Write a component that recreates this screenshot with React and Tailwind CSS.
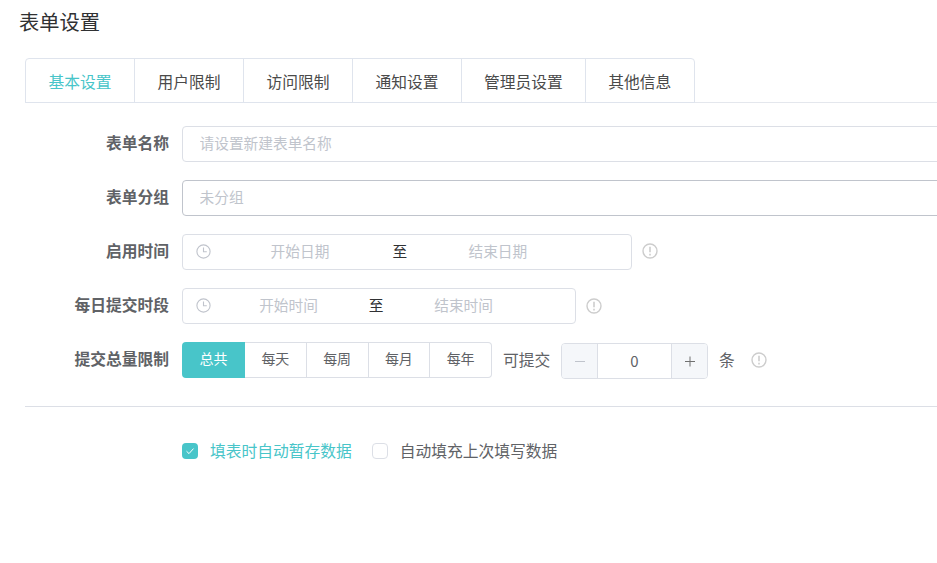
import React from "react";

const font = { fontFamily: '"Noto Sans CJK SC", "Noto Sans", sans-serif' };

function Clock() {
  return (
    <svg width="15" height="15" viewBox="0 0 15 15" fill="none" stroke="#c0c4cc" strokeWidth="1.1" className="block">
      <circle cx="7.5" cy="7.5" r="6.6" />
      <path d="M7.5 3.6V7.8H10.8" />
    </svg>
  );
}

function Info({ className = "" }) {
  return (
    <svg width="16" height="16" viewBox="0 0 16 16" fill="none" stroke="#cdcdcd" strokeWidth="1.4" className={`block shrink-0 ${className}`}>
      <circle cx="8" cy="8" r="7" />
      <path d="M8 3.8V9.2" strokeWidth="1.6" />
      <path d="M8 10.8V12.4" strokeWidth="1.6" />
    </svg>
  );
}

function Row({ label, children }) {
  return (
    <div className="flex items-start h-9 mb-[18px]">
      <label className="w-[157px] pr-[13px] text-right text-[15.75px] font-bold leading-[34px] text-[#606266] shrink-0">{label}</label>
      {children}
    </div>
  );
}

function Range({ width, iconWidth, sepClass, start, end }) {
  return (
    <div className={`${width} h-9 shrink-0 flex items-center px-[10px] pb-[2px] border border-[#dcdfe6] rounded bg-white`}>
      <span className={`${iconWidth} shrink-0`}><span className="block w-[25px] pl-[2.5px]"><Clock /></span></span>
      <span className="w-[39%] text-center text-[14.7px] text-[#c0c4cc]">{start}</span>
      <span className={`${sepClass} shrink-0 text-center text-[14.7px] text-[#303133]`}>至</span>
      <span className="w-[39%] text-center text-[14.7px] text-[#c0c4cc]">{end}</span>
    </div>
  );
}

const tabs = ["基本设置", "用户限制", "访问限制", "通知设置", "管理员设置", "其他信息"];
const periods = ["每天", "每周", "每月", "每年"];

export default function App() {
  return (
    <div className="w-[937px] h-[563px] overflow-hidden bg-white" style={font}>
      <div className="w-[1200px]">
        <h1 className="pl-[19px] pt-[8px] text-[20.25px] leading-[28px] font-normal text-[#303133]">表单设置</h1>

        <div className="ml-[25px] mt-[22px] flex h-[45px] border-b border-[#e4e7ed]">
          <div className="flex h-[45px] border border-[#dfe4ed] rounded-t">
            {tabs.map((t, i) => (
              <div
                key={t}
                className={`h-[44px] text-[15.75px] leading-[45px] ${i === 4 ? "px-[22px]" : "px-[22.5px]"} ${i > 0 ? "border-l border-[#dfe4ed]" : ""} ${i === 0 ? "text-[#48c5c9]" : "text-[#4a4a4a]"}`}
              >
                {t}
              </div>
            ))}
          </div>
        </div>

        <div className="ml-[25px] mt-[23px]">
          <Row label="表单名称">
            <input
              readOnly
              placeholder="请设置新建表单名称"
              className="w-[900px] h-9 px-[16.5px] pb-[3px] border border-[#dcdfe6] rounded text-[14.7px] outline-none placeholder:text-[#c0c4cc]"
            />
          </Row>
          <Row label="表单分组">
            <input
              readOnly
              placeholder="未分组"
              className="w-[900px] h-9 px-[16.5px] pb-[3px] border border-[#c0c4cc] rounded text-[14.7px] outline-none placeholder:text-[#c0c4cc]"
            />
          </Row>
          <Row label="启用时间">
            <Range width="w-[450px]" iconWidth="w-[23.5px]" sepClass="w-[31px] pl-[2px]" start="开始日期" end="结束日期" />
            <Info className="ml-[10px] mt-[9px]" />
          </Row>
          <Row label="每日提交时段">
            <Range width="w-[394px]" iconWidth="w-[23px]" sepClass="w-[30px]" start="开始时间" end="结束时间" />
            <Info className="ml-[10px] mt-[10px]" />
          </Row>
          <Row label="提交总量限制">
            <div className="flex h-9 text-sm w-[310px] shrink-0">
              <div className="w-[63px] bg-[#48c5c9] text-white rounded-l text-center leading-[33px]">总共</div>
              {periods.map((p, i) => (
                <div
                  key={p}
                  className={`flex-1 border-y border-r border-[#dcdfe6] text-center leading-[31px] text-[#606266] ${i === 3 ? "rounded-r" : ""}`}
                >
                  {p}
                </div>
              ))}
            </div>
            <span className="ml-[11px] text-[15.75px] leading-9 text-[#606266]">可提交</span>
            <div className="ml-[10.75px] mt-[1px] w-[147px] h-9 flex border border-[#dcdfe6] rounded overflow-hidden text-[#606266]">
              <div className="w-[36px] bg-[#f5f7fa] border-r border-[#dcdfe6] flex items-center justify-center">
                <svg width="12" height="12" viewBox="0 0 12 12" stroke="#c0c4cc" className="block"><path d="M1 6.5H11" /></svg>
              </div>
              <div className="flex-1 text-center text-[15px] leading-[34px]">0</div>
              <div className="w-[36px] bg-[#f5f7fa] border-l border-[#dcdfe6] flex items-center justify-center">
                <svg width="12" height="12" viewBox="0 0 12 12" stroke="#707070" className="block"><path d="M1 6.5H11M6 1.5V11.5" /></svg>
              </div>
            </div>
            <span className="ml-[11px] text-[15.75px] leading-9 text-[#606266]">条</span>
            <Info className="ml-[16px] mt-[10px]" />
          </Row>
        </div>

        <div className="ml-[25px] mt-[28px] border-t border-[#dcdfe6]" />

        <div className="ml-[182px] mt-[32px] flex items-center h-6 text-[15.75px]">
          <span className="w-4 h-4 rounded-sm bg-[#48c5c9] flex items-center justify-center">
            <svg width="10" height="10" viewBox="0 0 10 10" fill="none" stroke="#fff" strokeWidth="1" className="block"><path d="M1.5 5.2L4 7.6L8.5 2.6" /></svg>
          </span>
          <span className="ml-3 text-[#48c5c9]">填表时自动暂存数据</span>
          <span className="ml-5 w-4 h-4 rounded-sm border border-[#dcdfe6] bg-white" />
          <span className="ml-3 text-[#606266]">自动填充上次填写数据</span>
        </div>
      </div>
    </div>
  );
}
